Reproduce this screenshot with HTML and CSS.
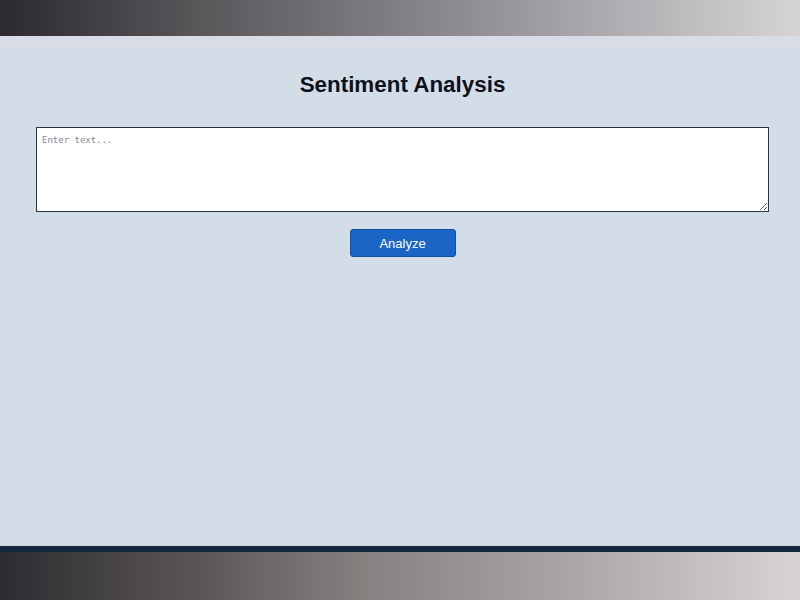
FILE: index.html
```html
<!DOCTYPE html>
<html>
<head>
<meta charset="utf-8">
<link rel="stylesheet" href="styles.css">
</head>
<body>
<div class="topbar"></div>
<main class="main">
  <h1 class="title">Sentiment Analysis</h1>
  <textarea class="input" placeholder="Enter text..."></textarea>
  <button class="btn">Analyze</button>
</main>
<div class="bottomline"></div>
<div class="bottombar"></div>
</body>
</html>
```
FILE: styles.css
```css
html, body {
  margin: 0;
  padding: 0;
  height: 600px;
  overflow: hidden;
}
body {
  display: flex;
  flex-direction: column;
  background: #d2dde8;
  font-family: "Liberation Sans", Arial, sans-serif;
}
.topbar {
  height: 36px;
  flex: none;
  background: linear-gradient(to right, #2c2a2f, #5a575b 25%, #7e7c80 48%, #a3a1a5 70%, #d6d4d6);
}
.main {
  flex: 1;
  display: flex;
  flex-direction: column;
  align-items: center;
  padding: 0 31px 0 36px;
  background: linear-gradient(to bottom, #d8dce4 0, #d8dce4 12px, #d2dde8 12px);
}
.title {
  margin: 36px 0 0;
  font-size: 22.4px;
  font-weight: bold;
  color: #0e111a;
  line-height: 26px;
}
.input {
  box-sizing: border-box;
  width: 733px;
  height: 85px;
  margin-top: 29px;
  border: 1px solid #2b3340;
  background: #fff;
  padding: 7px 5px;
  font-family: "DejaVu Sans Mono", monospace;
  font-size: 9px;
  resize: vertical;
}
.input::placeholder {
  color: #8a8294;
}
.btn {
  margin-top: 17px;
  width: 106px;
  height: 28px;
  background: #1a65c6;
  color: #fff;
  border: 1px solid #124f9e;
  border-radius: 3px;
  font-family: "Liberation Sans", Arial, sans-serif;
  font-size: 13px;
  padding: 0;
}
.bottomline {
  height: 6px;
  flex: none;
  background: #15273e;
  border-top: 1px solid #c8d4e2;
}
.bottombar {
  height: 48px;
  flex: none;
  background: linear-gradient(to right, #2e2c30, #5a5658 25%, #86807f 45%, #a8a4a6 70%, #d8d3d4);
}
```
